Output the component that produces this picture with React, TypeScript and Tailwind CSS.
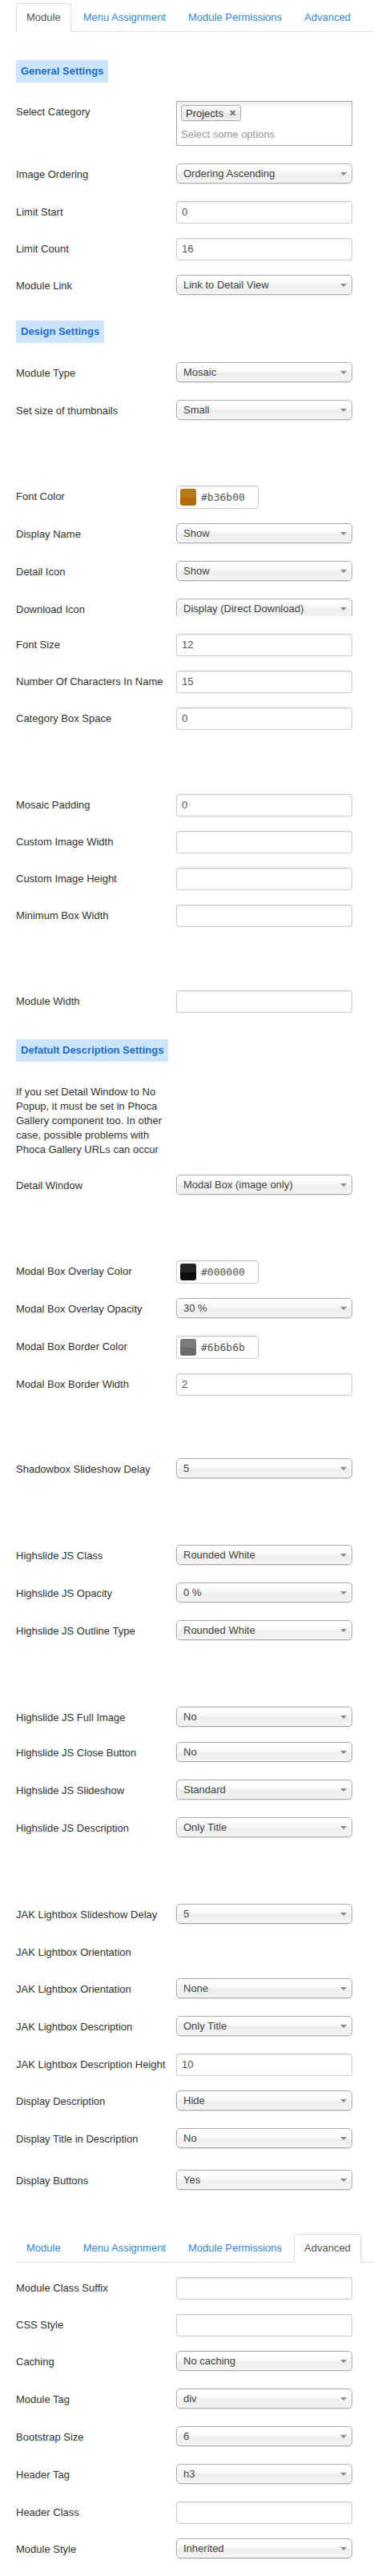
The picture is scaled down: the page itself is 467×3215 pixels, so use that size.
import React from 'react';

type Field = {
  label?: string;
  type: 'select' | 'input' | 'color' | 'none';
  value?: string;
  swatch?: string;
  gap?: string;
  h?: string;
  clip?: boolean;
};

const TABS = ['Module', 'Menu Assignment', 'Module Permissions', 'Advanced'];

const Tabs: React.FC<{ active: string; className?: string }> = ({ active, className }) => (
  <ul className={`flex border-b border-[#ddd] ${className ?? ''}`}>
    {TABS.map((t) => (
      <li key={t} className="-mb-px mr-[2px]">
        <span
          className={
            t === active
              ? 'block rounded-t-[4px] border border-[#ddd] border-b-transparent bg-white px-[12px] py-[8px] leading-[18px] text-[#555]'
              : 'block rounded-t-[4px] border border-transparent px-[12px] py-[8px] leading-[18px] text-[#3387d6]'
          }
        >
          {t}
        </span>
      </li>
    ))}
  </ul>
);

const Heading: React.FC<{ text: string; className?: string }> = ({ text, className }) => (
  <div className={`w-fit bg-[#cce5fc] px-[6px] leading-[28px] font-bold text-[#1a6cc9] ${className ?? ''}`}>
    {text}
  </div>
);

const Select: React.FC<{ value: string }> = ({ value }) => (
  <div className="relative h-[25px] w-[220px] rounded-[5px] border border-[#aaa] bg-[linear-gradient(#fff_20%,#f6f6f6_50%,#eee_52%,#f4f4f4_100%)] pl-[8px] leading-[23px] text-[#444] shadow-[inset_0_0_3px_#fff,0_1px_1px_rgba(0,0,0,0.1)]">
    {value}
    <span className="absolute right-[6px] top-[10px] h-0 w-0 border-x-[4px] border-t-[4px] border-x-transparent border-t-[#888]" />
  </div>
);

const Input: React.FC<{ value?: string }> = ({ value }) => (
  <div className="h-[28px] w-[220px] rounded-[3px] border border-[#ccc] bg-white px-[6px] py-[4px] leading-[18px] text-[#555] shadow-[inset_0_1px_1px_rgba(0,0,0,0.075)]">
    {value}
  </div>
);

const ColorInput: React.FC<{ value: string; swatch: string }> = ({ value, swatch }) => (
  <div className="flex h-[29px] w-[103px] items-center gap-[6px] rounded-[3px] border border-[#ccc] bg-white pl-[4px] shadow-[inset_0_1px_1px_rgba(0,0,0,0.075)]">
    <div className={`flex h-[21px] w-[20px] flex-col overflow-hidden rounded-[3px] ${swatch}`}>
      <div className="h-1/2 bg-white/10" />
    </div>
    <span className="font-['DejaVu_Sans_Mono',monospace] text-[13px] text-[#555]">{value}</span>
  </div>
);

const FieldRow: React.FC<{ f: Field }> = ({ f }) => {
  const height = f.h ?? (f.type === 'input' || f.type === 'none' ? 'h-[28px]' : 'h-[29px]');
  let control: React.ReactNode = null;
  if (f.type === 'select') {
    control = f.clip ? (
      <div className="h-[22px] overflow-hidden">
        <Select value={f.value ?? ''} />
      </div>
    ) : (
      <Select value={f.value ?? ''} />
    );
  } else if (f.type === 'input') {
    control = <Input value={f.value} />;
  } else if (f.type === 'color') {
    control = <ColorInput value={f.value ?? ''} swatch={f.swatch ?? ''} />;
  }
  return (
    <div className={`mb-[18px] flex shrink-0 ${height} ${f.gap ?? ''}`}>
      <label className="w-[200px] shrink-0 pt-[5px] leading-[18px] text-[#333]">{f.label}</label>
      {control}
    </div>
  );
};

const general: Field[] = [
  { label: 'Image Ordering', type: 'select', value: 'Ordering Ascending' },
  { label: 'Limit Start', type: 'input', value: '0' },
  { label: 'Limit Count', type: 'input', value: '16' },
  { label: 'Module Link', type: 'select', value: 'Link to Detail View' },
];

const design: Field[] = [
  { label: 'Module Type', type: 'select', value: 'Mosaic' },
  { label: 'Set size of thumbnails', type: 'select', value: 'Small' },
  { label: 'Font Color', type: 'color', value: '#b36b00', swatch: 'bg-[#b36b00]', gap: 'mt-[60px]' },
  { label: 'Display Name', type: 'select', value: 'Show' },
  { label: 'Detail Icon', type: 'select', value: 'Show' },
  { label: 'Download Icon', type: 'select', value: 'Display (Direct Download)', h: 'h-[26px]', clip: true },
  { label: 'Font Size', type: 'input', value: '12' },
  { label: 'Number Of Characters In Name', type: 'input', value: '15' },
  { label: 'Category Box Space', type: 'input', value: '0' },
  { label: 'Mosaic Padding', type: 'input', value: '0', gap: 'mt-[62px]' },
  { label: 'Custom Image Width', type: 'input' },
  { label: 'Custom Image Height', type: 'input' },
  { label: 'Minimum Box Width', type: 'input' },
  { label: 'Module Width', type: 'input', gap: 'mt-[61px]' },
];

const description: Field[] = [
  { label: 'Detail Window', type: 'select', value: 'Modal Box (image only)' },
  { label: 'Modal Box Overlay Color', type: 'color', value: '#000000', swatch: 'bg-[#0c0c0c]', gap: 'mt-[60px]' },
  { label: 'Modal Box Overlay Opacity', type: 'select', value: '30 %' },
  { label: 'Modal Box Border Color', type: 'color', value: '#6b6b6b', swatch: 'bg-[#6b6b6b]' },
  { label: 'Modal Box Border Width', type: 'input', value: '2' },
  { label: 'Shadowbox Slideshow Delay', type: 'select', value: '5', gap: 'mt-[60px]' },
  { label: 'Highslide JS Class', type: 'select', value: 'Rounded White', gap: 'mt-[61px]' },
  { label: 'Highslide JS Opacity', type: 'select', value: '0 %' },
  { label: 'Highslide JS Outline Type', type: 'select', value: 'Rounded White' },
  { label: 'Highslide JS Full Image', type: 'select', value: 'No', gap: 'mt-[61px]', h: 'h-[26px]' },
  { label: 'Highslide JS Close Button', type: 'select', value: 'No' },
  { label: 'Highslide JS Slideshow', type: 'select', value: 'Standard' },
  { label: 'Highslide JS Description', type: 'select', value: 'Only Title' },
  { label: 'JAK Lightbox Slideshow Delay', type: 'select', value: '5', gap: 'mt-[61px]' },
  { label: 'JAK Lightbox Orientation', type: 'none' },
  { label: 'JAK Lightbox Orientation', type: 'select', value: 'None' },
  { label: 'JAK Lightbox Description', type: 'select', value: 'Only Title' },
  { label: 'JAK Lightbox Description Height', type: 'input', value: '10' },
  { label: 'Display Description', type: 'select', value: 'Hide' },
  { label: 'Display Title in Description', type: 'select', value: 'No' },
  { label: 'Display Buttons', type: 'select', value: 'Yes', gap: 'mt-[5px]' },
];

const advanced: Field[] = [
  { label: 'Module Class Suffix', type: 'input', gap: 'mt-[18px]' },
  { label: 'CSS Style', type: 'input' },
  { label: 'Caching', type: 'select', value: 'No caching' },
  { label: 'Module Tag', type: 'select', value: 'div' },
  { label: 'Bootstrap Size', type: 'select', value: '6' },
  { label: 'Header Tag', type: 'select', value: 'h3' },
  { label: 'Header Class', type: 'input' },
];

export default function App() {
  return (
    <div className="flex min-h-[3215px] flex-col bg-white pb-[16px] pl-[20px] pt-[4px] font-['Liberation_Sans',Arial,sans-serif] text-[13px] text-[#333]">
      <Tabs active="Module" />

      {/* General Settings */}
      <Heading text="General Settings" className="mb-[23px] mt-[35px]" />
      <div className="mb-[18px] flex h-[60px] shrink-0">
        <label className="w-[200px] shrink-0 pt-[5px] leading-[18px]">Select Category</label>
        <div className="flex h-[56px] w-[220px] flex-col border border-[#aaa] bg-[linear-gradient(#eee_1%,#fff_15%)] pl-[5px] pt-[4px]">
          <div className="flex h-[20px] w-fit items-center rounded-[3px] border border-[#aaa] bg-[linear-gradient(#f4f4f4_20%,#f0f0f0_50%,#e8e8e8_52%,#eee_100%)] pl-[5px] pr-[5px] leading-[13px] text-[#333] shadow-[inset_0_0_2px_#fff,0_1px_0_rgba(0,0,0,0.05)]">
            Projects
            <span className="ml-[7px] text-[11px] font-bold text-[#666]">✕</span>
          </div>
          <div className="mt-[8px] leading-[18px] text-[#999]">Select some options</div>
        </div>
      </div>
      {general.map((f, i) => (
        <FieldRow key={'g' + i} f={f} />
      ))}

      {/* Design Settings */}
      <Heading text="Design Settings" className="mb-[24px] mt-[10px]" />
      {design.map((f, i) => (
        <FieldRow key={'d' + i} f={f} />
      ))}

      {/* Description Settings */}
      <Heading text="Defatult Description Settings" className="mb-[24px] mt-[15px]" />
      <p className="mb-[22px] w-[200px] pt-[5px] leading-[18px] text-[#333]">
        If you set Detail Window to No
        <br />
        Popup, it must be set in Phoca
        <br />
        Gallery component too. In other
        <br />
        case, possible problems with
        <br />
        Phoca Gallery URLs can occur
      </p>
      {description.map((f, i) => (
        <FieldRow key={'x' + i} f={f} />
      ))}

      {/* Advanced tab */}
      <Tabs active="Advanced" className="mt-[33px]" />
      {advanced.map((f, i) => (
        <FieldRow key={'a' + i} f={f} />
      ))}
      <div className="flex h-[29px] shrink-0">
        <label className="w-[200px] shrink-0 pt-[5px] leading-[18px]">Module Style</label>
        <Select value="Inherited" />
      </div>
    </div>
  );
}
